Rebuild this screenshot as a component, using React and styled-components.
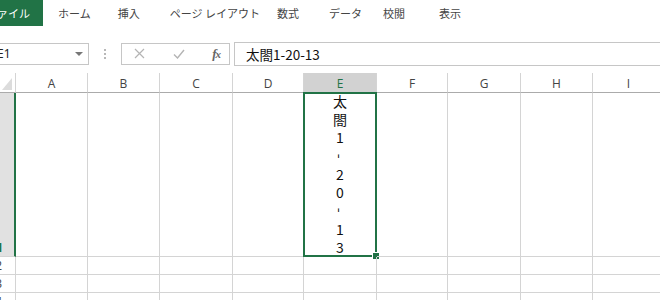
import React from "react";
import styled, { createGlobalStyle } from "styled-components";

const GlobalStyle = createGlobalStyle`
  html, body {
    margin: 0;
    padding: 0;
    background: #fff;
    overflow: hidden;
  }
  body {
    width: 660px;
    height: 300px;
    font-family: "Noto Sans CJK JP", "Noto Sans", sans-serif;
  }
`;

const green = "#217346";
const gridLine = "#d4d4d4";

const TabBar = styled.div`
  display: flex;
  align-items: center;
  height: 26px;
  font-size: 11px;
  color: #444;
`;

const FileTab = styled.div`
  background: ${green};
  color: #fff;
  height: 26px;
  width: 43px;
  display: flex;
  align-items: center;
  justify-content: flex-end;
  padding-right: 13px;
  box-sizing: border-box;
  overflow: hidden;
  white-space: nowrap;
  margin-right: ${(p) => p.$gap}px;
`;

const Tab = styled.div`
  white-space: nowrap;
  margin-right: ${(p) => p.$gap}px;
`;

const FormulaBar = styled.div`
  display: flex;
  align-items: center;
  height: 23px;
  margin-top: 16px;
`;

const NameBox = styled.div`
  width: 96px;
  height: 22px;
  margin-left: -7px;
  box-sizing: border-box;
  border: 1px solid #c6c6c6;
  display: flex;
  align-items: center;
  padding-left: 3px;
  font-family: "Noto Sans", sans-serif;
  font-size: 12px;
  color: #222;
`;

const DropArrow = styled.div`
  margin-left: auto;
  margin-right: 5px;
  width: 0;
  height: 0;
  border-left: 4px solid transparent;
  border-right: 4px solid transparent;
  border-top: 4px solid #777;
`;

const Dots = styled.div`
  width: 32px;
  display: flex;
  flex-direction: column;
  align-items: center;
  gap: 2px;
  span {
    width: 2px;
    height: 2px;
    background: #b8b8b8;
  }
`;

const ButtonBox = styled.div`
  width: 109px;
  height: 22px;
  box-sizing: border-box;
  border: 1px solid #c6c6c6;
  display: flex;
  align-items: center;
  justify-content: space-between;
  padding: 0 9px 0 12px;
`;

const Fx = styled.span`
  font-family: "Liberation Serif", serif;
  font-style: italic;
  font-weight: bold;
  font-size: 13px;
  color: #666;
  letter-spacing: -1px;
  small {
    font-size: 11px;
  }
`;

const FormulaInput = styled.div`
  flex: 1;
  height: 24px;
  margin-left: 4px;
  box-sizing: border-box;
  border: 1px solid #c6c6c6;
  border-right: none;
  display: flex;
  align-items: center;
  padding-left: 11px;
  font-size: 13.5px;
  color: #111;
`;

const Sheet = styled.div`
  margin-top: 8px;
  display: grid;
  grid-template-columns: 16px 72px 72px 73px 71px 73px 71px 73px 72px 72px;
  grid-template-rows: 20px 164px 18px 18px 18px;
`;

const Corner = styled.div`
  border-right: 1px solid ${gridLine};
  border-bottom: 1px solid #ababab;
  position: relative;
  &::after {
    content: "";
    position: absolute;
    right: 3px;
    bottom: 2px;
    width: 0;
    height: 0;
    border-left: 10px solid transparent;
    border-bottom: 12px solid #dcdcdc;
  }
`;

const ColHead = styled.div`
  border-right: 1px solid ${gridLine};
  border-bottom: 1px solid #ababab;
  background: ${(p) => (p.$active ? "#d2d2d2" : "#fff")};
  color: ${(p) => (p.$active ? green : "#444")};
  font-family: "Open Sans", "Noto Sans", sans-serif;
  font-size: 12px;
  display: flex;
  align-items: center;
  justify-content: center;
  padding-top: 2px;
`;

const RowHead = styled.div`
  box-sizing: border-box;
  border-bottom: 1px solid ${gridLine};
  border-right: ${(p) => (p.$active ? `2px solid ${green}` : `1px solid ${gridLine}`)};
  background: ${(p) => (p.$active ? "#e1e1e1" : "#fff")};
  color: ${(p) => (p.$active ? green : "#444")};
  font-weight: ${(p) => (p.$active ? "bold" : "normal")};
  font-family: "Open Sans", "Noto Sans", sans-serif;
  font-size: 12px;
  display: flex;
  align-items: flex-end;
  justify-content: flex-end;
  padding-right: ${(p) => (p.$active ? 11 : 13)}px;
  line-height: 17px;
  overflow: hidden;
  white-space: nowrap;
`;

const Cell = styled.div`
  box-sizing: border-box;
  border-right: 1px solid ${gridLine};
  border-bottom: 1px solid ${gridLine};
  position: relative;
`;

const ActiveCell = styled(Cell)`
  display: flex;
  flex-direction: column;
  align-items: center;
  justify-content: flex-end;
  font-size: 14px;
  line-height: 18.25px;
  color: #111;
  &::before {
    content: "";
    position: absolute;
    left: -1px;
    top: -1px;
    right: -1px;
    bottom: -1px;
    border: 2px solid ${green};
  }
  &::after {
    content: "";
    position: absolute;
    right: -4px;
    bottom: -4px;
    width: 6px;
    height: 6px;
    background: ${green};
    border: 1px solid #fff;
  }
`;

const Char = styled.span`
  display: block;
  text-align: center;
  transform: ${(p) => (p.$dash ? "rotate(90deg)" : "none")};
`;

const value = "太閤1-20-13";
const columns = ["A", "B", "C", "D", "E", "F", "G", "H", "I"];
const rows = [1, 2, 3, 4];

const App = () => {
  return (
    <>
      <GlobalStyle />
      <TabBar>
        <FileTab $gap={15}>ファイル</FileTab>
        <Tab $gap={27}>ホーム</Tab>
        <Tab $gap={30}>挿入</Tab>
        <Tab $gap={17}>ページ レイアウト</Tab>
        <Tab $gap={30}>数式</Tab>
        <Tab $gap={21}>データ</Tab>
        <Tab $gap={34}>校閲</Tab>
        <Tab $gap={0}>表示</Tab>
      </TabBar>

      <FormulaBar>
        <NameBox>
          E1
          <DropArrow />
        </NameBox>
        <Dots>
          <span />
          <span />
          <span />
        </Dots>
        <ButtonBox>
          <svg width="11" height="11" viewBox="0 0 11 11">
            <path d="M1 1 L10 10 M10 1 L1 10" stroke="#b4b4b4" strokeWidth="1.2" fill="none" />
          </svg>
          <svg width="12" height="10" viewBox="0 0 12 10">
            <path d="M1 5.5 L4.5 9 L11 1" stroke="#b4b4b4" strokeWidth="1.4" fill="none" />
          </svg>
          <Fx>
            f<small>x</small>
          </Fx>
        </ButtonBox>
        <FormulaInput>{value}</FormulaInput>
      </FormulaBar>

      <Sheet>
        <Corner />
        {columns.map((c) => (
          <ColHead key={c} $active={c === "E"}>
            {c}
          </ColHead>
        ))}
        {rows.map((r) => (
          <React.Fragment key={r}>
            <RowHead $active={r === 1}>{r}</RowHead>
            {columns.map((c) =>
              c === "E" && r === 1 ? (
                <ActiveCell key={c}>
                  {value.split("").map((ch, i) => (
                    <Char key={i} $dash={ch === "-"}>
                      {ch}
                    </Char>
                  ))}
                </ActiveCell>
              ) : (
                <Cell key={c} />
              )
            )}
          </React.Fragment>
        ))}
      </Sheet>
    </>
  );
};

export default App;
